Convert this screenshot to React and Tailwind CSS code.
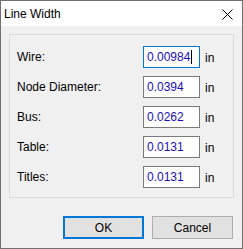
import React from 'react';

const fields = [
  { label: 'Wire:', value: '0.00984', focused: true },
  { label: 'Node Diameter:', value: '0.0394' },
  { label: 'Bus:', value: '0.0262' },
  { label: 'Table:', value: '0.0131' },
  { label: 'Titles:', value: '0.0131' },
];

const FieldRow = ({ label, value, focused }) => (
  <div className="flex items-center h-[22px]">
    <div className="w-[126px] text-black leading-none -mt-[1px]">{label}</div>
    <div
      className={`relative w-[57px] h-[22px] bg-white border flex items-center pl-[3px] ${
        focused ? 'border-[#0078d7]' : 'border-[#7a7a7a]'
      }`}
    >
      <span className="text-[#1a0fb4] leading-none">{value}</span>
      {focused && <span className="ml-[1px] w-[1px] h-[14px] bg-black" />}
    </div>
    <div className="ml-[5px] text-black leading-none mt-[2px]">in</div>
  </div>
);

const App = () => {
  return (
    <div
      className="w-[243px] h-[249px] border border-[#707070] bg-[#f0f0f0] flex flex-col text-[12px] select-none"
      style={{ fontFamily: '"Liberation Sans", Arial, sans-serif' }}
    >
      {/* title bar */}
      <div className="h-[25px] bg-white flex items-center justify-between pl-[3px] pr-[9px]">
        <span className="text-black">Line Width</span>
        <svg width="11" height="11" viewBox="0 0 11 11" className="mt-[1px]">
          <path d="M0.5 0.5 L10.5 10.5 M10.5 0.5 L0.5 10.5" stroke="#000" strokeWidth="1" />
        </svg>
      </div>

      {/* body */}
      <div className="flex-1 px-[8px] pt-[8px]">
        <div className="w-[225px] h-[164px] border border-[#dcdcdc] pl-[7px] pt-[11px] flex flex-col gap-[8px]">
          {fields.map((f) => (
            <FieldRow key={f.label} {...f} />
          ))}
        </div>

        <div className="flex justify-end gap-[8px] mt-[18px] pr-[1px]">
          <button className="w-[81px] h-[23px] bg-[#e1e1e1] border-2 border-[#0078d7] text-black leading-none">
            OK
          </button>
          <button className="w-[81px] h-[23px] bg-[#e1e1e1] border border-[#adadad] text-black leading-none">
            Cancel
          </button>
        </div>
      </div>
    </div>
  );
};

export default App;
